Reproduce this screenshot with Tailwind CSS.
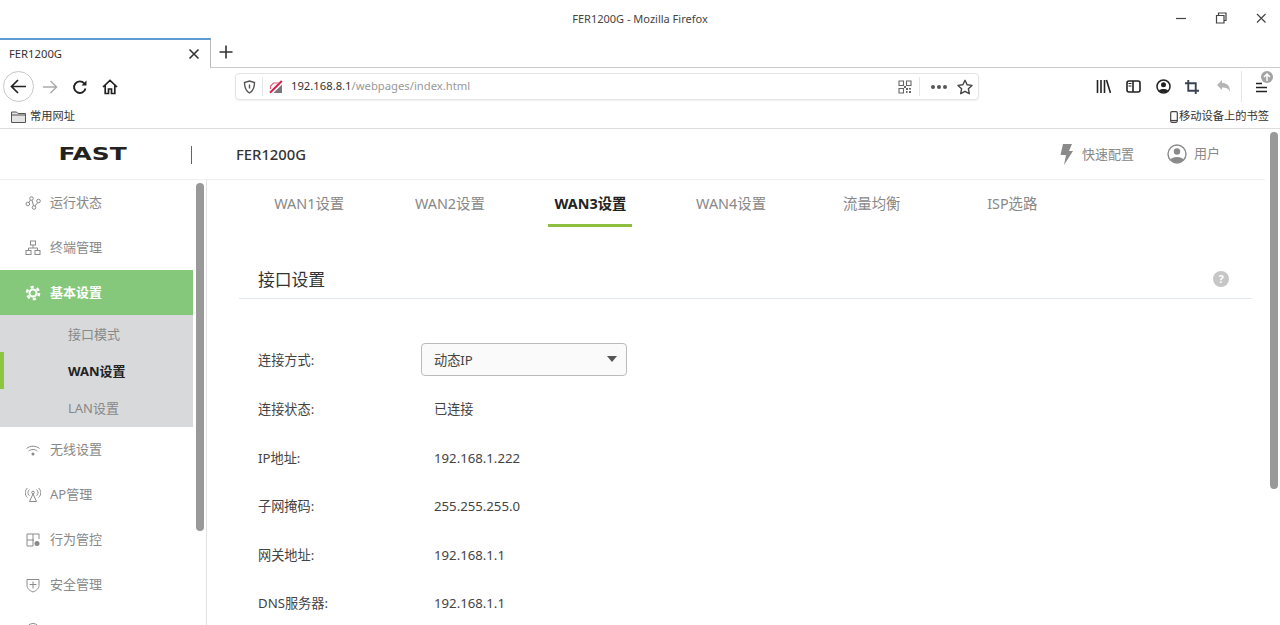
<!DOCTYPE html>
<html lang="zh-CN">
<head>
  <meta charset="UTF-8" />
  <title>FER1200G - Mozilla Firefox</title>
  <script src="https://cdn.jsdelivr.net/npm/@tailwindcss/browser@4"></script>
</head>
<body class="w-[1280px] h-[625px] overflow-hidden bg-white text-[#333] font-['Noto_Sans','Noto_Sans_CJK_SC',sans-serif]">

  <!-- titlebar -->
  <div class="relative h-[38px] flex items-center justify-center text-[11px] text-[#444]">
    <span>FER1200G - Mozilla Firefox</span>
    <div class="absolute right-[12px] top-[11px] flex gap-[26px] text-[#444]">
      <svg class="w-[14px] h-[14px]" viewBox="0 0 14 14" fill="none" stroke="currentColor" stroke-width="1.2"><path d="M2 7.5h10"/></svg>
      <svg class="w-[14px] h-[14px]" viewBox="0 0 14 14" fill="none" stroke="currentColor" stroke-width="1.2"><path d="M2.5 4.5h7.5v7.500h-7.500zM4.500 4.500v-2.500h7.500v7.500h-2"/></svg>
      <svg class="w-[14px] h-[14px]" viewBox="0 0 14 14" fill="none" stroke="currentColor" stroke-width="1.200"><path d="M3 3l8.500 8.500M11.500 3L3 11.500"/></svg>
    </div>
  </div>

  <!-- tab strip -->
  <div class="h-[30px] flex">
    <div class="w-[211px] h-full border-t-2 border-t-[#5b9bd0] border-r border-r-[#bbb] flex items-center justify-between pl-[9px] pr-[10px] text-[11.25px]">
      <span>FER1200G</span>
      <svg class="w-[12px] h-[12px]" viewBox="0 0 12 12" fill="none" stroke="#333" stroke-width="1.600"><path d="M1.500 1.500l9 9M10.500 1.500l-9 9"/></svg>
    </div>
    <div class="flex-1 border-b border-[#ccc] pl-[8px] pt-[7px]">
      <svg class="w-[14px] h-[14px]" viewBox="0 0 14 14" fill="none" stroke="#333" stroke-width="1.600"><path d="M7 .500v13M.500 7h13"/></svg>
    </div>
  </div>

  <!-- nav bar -->
  <div class="h-[37px] flex items-center">
    <div class="w-[235px] flex items-center pl-[3px]">
      <div class="w-[31px] h-[31px] rounded-full border border-[#c8c8c8] flex items-center justify-center">
        <svg class="w-[17px] h-[17px]" viewBox="0 0 17 17" fill="none" stroke="#222" stroke-width="1.700"><path d="M16 8.500H1.500M8 2L1.500 8.500 8 15"/></svg>
      </div>
      <svg class="w-[16px] h-[16px] ml-[8px]" viewBox="0 0 17 17" fill="none" stroke="#aaa" stroke-width="1.500"><path d="M1 8.500h14.500M9 2l6.500 6.500L9 15"/></svg>
      <svg class="w-[16px] h-[16px] ml-[14px]" viewBox="0 0 16 16" fill="none" stroke="#222" stroke-width="1.900"><path d="M13.500 9.500a5.800 5.800 0 1 1-1.200-5"/><path d="M14.500 1.500v5h-5" fill="#222" stroke="none"/></svg>
      <svg class="w-[16px] h-[16px] ml-[14px]" viewBox="0 0 16 16" fill="none" stroke="#222" stroke-width="1.700"><path d="M1 8l7-6.500L15 8M3.200 6.500V14.500h3.300V10h3v4.500h3.300V6.500"/></svg>
    </div>
    <div class="w-[744px] h-[27px] rounded-[4px] border border-[#e3e3e3] shadow-[0_1px_2px_rgba(0,0,0,0.06)] flex items-center pl-[7px] pr-[5px] text-[11.25px]">
      <svg class="w-[13px] h-[14px]" viewBox="0 0 13 14" fill="none" stroke="#555" stroke-width="1.400"><path d="M6.500 1l5 1.500c0 5-1.500 8.500-5 10.500-3.500-2-5-5.500-5-10.500z"/><path d="M6.500 4.500v4"/></svg>
      <div class="w-px h-[19px] bg-[#e5e5e5] ml-[6px]"></div>
      <svg class="w-[14px] h-[14px] ml-[6px]" viewBox="0 0 14 14" fill="none"><path d="M4.500 13L13 4.500V13z" fill="#777"/><path d="M1 12.800L12.800 1" stroke="#d6204e" stroke-width="2"/><path d="M1.500 9V6l3-3h6" stroke="#e0607f" stroke-width="1.200"/></svg>
      <span class="ml-[8px] text-[#333]">192.168.8.1<span class="text-[#999]">/webpages/index.html</span></span>
      <div class="flex-1"></div>
      <svg class="w-[14px] h-[14px]" viewBox="0 0 14 14" fill="none" stroke="#666" stroke-width="1.100"><path d="M1 1h4.500v4.500H1zM8.500 1H13v4.500H8.500zM1 8.500h4.500V13H1z"/><path d="M8 8h2v2H8zM11 11h2v2h-2zM11 8h2v1.500h-2zM8 11h1.500v2H8zM6 6h2v2H6z" fill="#666" stroke="none"/></svg>
      <div class="w-px h-[19px] bg-[#e5e5e5] ml-[7px]"></div>
      <div class="flex gap-[2px] ml-[11px]">
        <span class="w-[4px] h-[4px] rounded-full bg-[#555]"></span>
        <span class="w-[4px] h-[4px] rounded-full bg-[#555]"></span>
        <span class="w-[4px] h-[4px] rounded-full bg-[#555]"></span>
      </div>
      <svg class="w-[16px] h-[16px] ml-[10px]" viewBox="0 0 16 16" fill="none" stroke="#444" stroke-width="1.400" stroke-linejoin="round"><path d="M8 1.300l2.100 4.500 4.900.6-3.600 3.400.9 4.900L8 12.300l-4.300 2.400.9-4.900L1 6.400l4.900-.6z"/></svg>
    </div>
    <div class="flex-1 flex items-center pl-[117px]">
      <svg class="w-[15px] h-[15px]" viewBox="0 0 15 15" fill="none" stroke="#222" stroke-width="1.600"><path d="M1.500 1v13M5 1v13M8.500 1v13M10.500 1l4 13"/></svg>
      <svg class="w-[15px] h-[15px] ml-[15px]" viewBox="0 0 15 15" fill="none" stroke="#222" stroke-width="1.600"><rect x="1" y="2" width="13" height="11" rx="2"/><path d="M7 2v11"/><path d="M2.500 4.500h3M2.500 7h3" stroke-width="1.200"/></svg>
      <svg class="w-[15px] h-[15px] ml-[15px]" viewBox="0 0 15 15" fill="none" stroke="#222" stroke-width="1.500"><circle cx="7.500" cy="7.500" r="6.500"/><circle cx="7.500" cy="5.800" r="2.500" fill="#222" stroke="none"/><path d="M3 11.500c1-2 8-2 9 0l-2 1.800h-5z" fill="#222" stroke="none"/></svg>
      <svg class="w-[14px] h-[14px] ml-[14px]" viewBox="0 0 15 15" fill="none" stroke="#3a4252" stroke-width="2"><path d="M3.500 0v11.500H15M0 3.500h11.500V15"/></svg>
      <svg class="w-[15px] h-[15px] ml-[17px]" viewBox="0 0 15 15"><path d="M1 6l5-5v3c5 0 8 2.500 8 9-1.500-3.500-3.500-4.500-8-4.500V11z" fill="#b5b5b5"/></svg>
      <div class="w-px h-[31px] bg-[#e5e5e5] ml-[10px]"></div>
      <div class="relative ml-[13px] mt-[2px]">
        <svg class="w-[13px] h-[13px]" viewBox="0 0 13 13" fill="none" stroke="#222" stroke-width="1.600"><path d="M1 2.500h6M1 6.500h11M1 10.500h11"/></svg>
        <div class="absolute -top-[10px] left-[6px] w-[12px] h-[12px] rounded-full bg-[#a3a3a3] flex items-center justify-center">
          <svg class="w-[8px] h-[8px]" viewBox="0 0 8 8" fill="none" stroke="#fff" stroke-width="1.500"><path d="M4 8V1M1 4l3-3 3 3"/></svg>
        </div>
      </div>
    </div>
  </div>

  <!-- bookmarks -->
  <div class="h-[24px] border-b border-[#ddd] flex items-center justify-between pl-[11px] pr-[11px] text-[11.25px] text-[#333]">
    <div class="flex items-center gap-[4px]">
      <svg class="w-[15px] h-[14px]" viewBox="0 0 15 14" fill="#e4e4e4" stroke="#555" stroke-width="1"><path d="M.5 12.500V2h5l1.500 1.500h7.500v9z"/><path d="M.5 5h14" fill="none"/></svg>
      <span>常用网址</span>
    </div>
    <div class="flex items-center gap-[1px]">
      <svg class="w-[8px] h-[12px]" viewBox="0 0 8 12" fill="none" stroke="#444" stroke-width="1.200"><rect x=".7" y=".7" width="6.600" height="10.600" rx="1.200"/><path d="M.7 9.500h6.600"/></svg>
      <span>移动设备上的书签</span>
    </div>
  </div>

  <!-- router page -->
  <div class="relative">
    <!-- page scrollbar -->
    <div class="absolute left-[1270px] top-[3px] w-[8px] h-[357px] rounded-full bg-[#999]"></div>

    <header class="h-[51px] w-[1265px] border-b border-[#f0f0f0] flex items-center">
      <div class="w-[191px] flex items-center">
        <span class="ml-[69px] w-[47px] flex justify-center font-['DejaVu_Sans'] font-bold text-[18px] leading-none text-[#222] scale-x-[1.38]">FAST</span>
      </div>
      <div class="w-px h-[18px] bg-[#5d6b52] mt-[2px]"></div>
      <span class="ml-[44px] text-[14.8px] font-medium text-[#333]">FER1200G</span>
      <div class="flex-1"></div>
      <svg class="w-[14px] h-[21px]" viewBox="0 0 14 21" fill="#8a8a8a"><path d="M4 0h9l-3 7h4L5 21l2-10H1.500z"/></svg>
      <span class="ml-[9px] mt-[2px] text-[13px] text-[#888]">快速配置</span>
      <svg class="w-[20px] h-[20px] ml-[33px]" viewBox="0 0 20 20" fill="none" stroke="#8a8a8a" stroke-width="1.400"><circle cx="10" cy="10" r="9"/><circle cx="10" cy="7.500" r="3.200" fill="#8a8a8a" stroke="none"/><path d="M3.500 15.500c1.500-3.500 11.500-3.500 13 0-3 3.800-10 3.800-13 0z" fill="#8a8a8a" stroke="none"/></svg>
      <span class="ml-[7px] text-[13px] text-[#888]">用户</span>
      <div class="w-[45px]"></div>
    </header>

    <div class="flex h-[446px] overflow-hidden">
      <!-- sidebar -->
      <aside class="relative w-[207px] shrink-0 border-r border-[#e2e2e2] text-[13px] text-[#888]">
        <div class="absolute left-[196px] top-[3px] w-[8px] h-[348px] rounded-full bg-[#999]"></div>
        <div class="w-[193px]">
          <div class="h-[45px] flex items-center pl-[25px] gap-[9px]">
            <svg class="w-[16px] h-[16px]" viewBox="0 0 16 16" fill="none" stroke="#8a8a8a" stroke-width="1"><circle cx="2.800" cy="9" r="1.800"/><circle cx="6.500" cy="3.500" r="1.800"/><circle cx="9" cy="12.500" r="1.800"/><circle cx="13.500" cy="6" r="1.800"/><path d="M3.800 7.500l1.700-2.500M7 5.300l1.500 5.400M10 11l2.700-3.400"/></svg>
            <span>运行状态</span>
          </div>
          <div class="h-[45px] flex items-center pl-[25px] gap-[9px]">
            <svg class="w-[16px] h-[16px]" viewBox="0 0 16 16" fill="none" stroke="#8a8a8a" stroke-width="1"><rect x="5.500" y="1" width="5" height="4"/><rect x="1" y="10.500" width="5" height="4"/><rect x="10" y="10.500" width="5" height="4"/><path d="M8 5v3M3.500 10.500V8h9v2.500"/></svg>
            <span>终端管理</span>
          </div>
          <div class="h-[45px] bg-[#86c87b] flex items-center pl-[25px] pt-[1px] gap-[9px] text-white font-bold">
            <svg class="w-[16px] h-[16px]" viewBox="0 0 16 16" fill="none" stroke="#fff"><circle cx="8" cy="8" r="3.500" stroke-width="2"/><circle cx="8" cy="8" r="6" stroke-width="2.600" stroke-dasharray="3.140 3.140"/></svg>
            <span>基本设置</span>
          </div>
          <div class="h-[112px] bg-[#d8d9db] relative">
            <div class="absolute left-0 top-[37px] w-[4px] h-[37px] bg-[#8cc63f]"></div>
            <div class="h-[38px] flex items-center pl-[68px] pt-[1px]">接口模式</div>
            <div class="h-[37px] flex items-center pl-[68px] font-bold text-[#222]">WAN设置</div>
            <div class="h-[37px] flex items-center pl-[68px]">LAN设置</div>
          </div>
          <div class="h-[45px] flex items-center pl-[25px] gap-[9px]">
            <svg class="w-[16px] h-[16px]" viewBox="0 0 16 16" fill="none" stroke="#8a8a8a" stroke-width="1"><path d="M1.500 6.500c3.500-3 9.500-3 13 0M3.700 9c2.500-2 6.100-2 8.600 0"/><circle cx="8" cy="12" r="1.500" fill="#8a8a8a" stroke="none"/></svg>
            <span>无线设置</span>
          </div>
          <div class="h-[45px] flex items-center pl-[25px] gap-[9px]">
            <svg class="w-[16px] h-[16px]" viewBox="0 0 16 16" fill="none" stroke="#8a8a8a" stroke-width="1"><circle cx="8" cy="5.500" r="1.300"/><path d="M8 7l-3.500 7.500h7zM4.500 2.500c-2 1.700-2 4.600 0 6.300M11.500 2.500c2 1.700 2 4.600 0 6.300M2.500 1c-3 2.500-3 7 0 9.500M13.500 1c3 2.500 3 7 0 9.500"/></svg>
            <span>AP管理</span>
          </div>
          <div class="h-[45px] flex items-center pl-[25px] gap-[9px]">
            <svg class="w-[16px] h-[16px]" viewBox="0 0 16 16" fill="none" stroke="#8a8a8a" stroke-width="1"><path d="M14 7V2H2v12h6M2 8h7M8 2v12"/><circle cx="12" cy="11.500" r="2.500" fill="#8a8a8a" stroke="none"/></svg>
            <span>行为管控</span>
          </div>
          <div class="h-[45px] flex items-center pl-[25px] gap-[9px]">
            <svg class="w-[16px] h-[16px]" viewBox="0 0 16 16" fill="none" stroke="#8a8a8a" stroke-width="1"><path d="M2 2.500h12v6c0 3-2.500 5-6 6.500-3.500-1.500-6-3.500-6-6.500z"/><path d="M8 4.500v7M4.500 7.500h7"/></svg>
            <span>安全管理</span>
          </div>
          <div class="h-[45px] flex items-center pl-[25px] gap-[9px]">
            <svg class="w-[16px] h-[16px]" viewBox="0 0 16 16" fill="none" stroke="#8a8a8a" stroke-width="1"><circle cx="8" cy="8" r="6.500"/></svg>
            <span>VPN</span>
          </div>
        </div>
      </aside>

      <!-- content -->
      <main class="flex-1 pl-[32px]">
        <nav class="flex h-[48px] text-[14.4px] text-[#888]">
          <div class="w-[140.6px] flex items-center justify-center">WAN1设置</div>
          <div class="w-[140.6px] flex items-center justify-center">WAN2设置</div>
          <div class="w-[140.6px] flex items-start justify-center"><span class="h-[47px] px-[6px] flex items-center border-b-[3px] border-[#8dc040] pt-[3px] font-bold text-[#222]">WAN3设置</span></div>
          <div class="w-[140.6px] flex items-center justify-center">WAN4设置</div>
          <div class="w-[140.6px] flex items-center justify-center">流量均衡</div>
          <div class="w-[140.6px] flex items-center justify-center">ISP选路</div>
        </nav>

        <div class="mt-[32px] w-[1012px] h-[39px] border-b border-[#dce6ec] flex items-center justify-between pl-[19px] pr-[22px]">
          <span class="text-[16.8px] text-[#333] pt-[2px]">接口设置</span>
          <span class="w-[16px] h-[16px] rounded-full bg-[#c6c6c6] flex items-center justify-center text-[11px] font-bold text-white">?</span>
        </div>

        <div class="pl-[19px] pt-[43px] text-[13.2px] text-[#444]">
          <div class="h-[34px] flex items-center">
            <span class="w-[163px] pt-[4px]">连接方式:</span>
            <div class="w-[206px] h-[33px] rounded-[4px] border border-[#bbb] bg-[#fafafa] flex items-center justify-between pl-[12px] pr-[9px]">
              <span class="pt-[4px]">动态IP</span>
              <span class="w-0 h-0 border-x-[5px] border-x-transparent border-t-[6px] border-t-[#555]"></span>
            </div>
          </div>
          <div class="mt-[17px] h-[34px] flex items-center"><span class="w-[176px]">连接状态:</span><span>已连接</span></div>
          <div class="mt-[14.600px] h-[34px] flex items-center"><span class="w-[176px]">IP地址:</span><span>192.168.1.222</span></div>
          <div class="mt-[14.600px] h-[34px] flex items-center"><span class="w-[176px]">子网掩码:</span><span>255.255.255.0</span></div>
          <div class="mt-[14.600px] h-[34px] flex items-center"><span class="w-[176px]">网关地址:</span><span>192.168.1.1</span></div>
          <div class="mt-[14.600px] h-[34px] flex items-center"><span class="w-[176px]">DNS服务器:</span><span>192.168.1.1</span></div>
        </div>
      </main>
    </div>
  </div>
</body>
</html>
